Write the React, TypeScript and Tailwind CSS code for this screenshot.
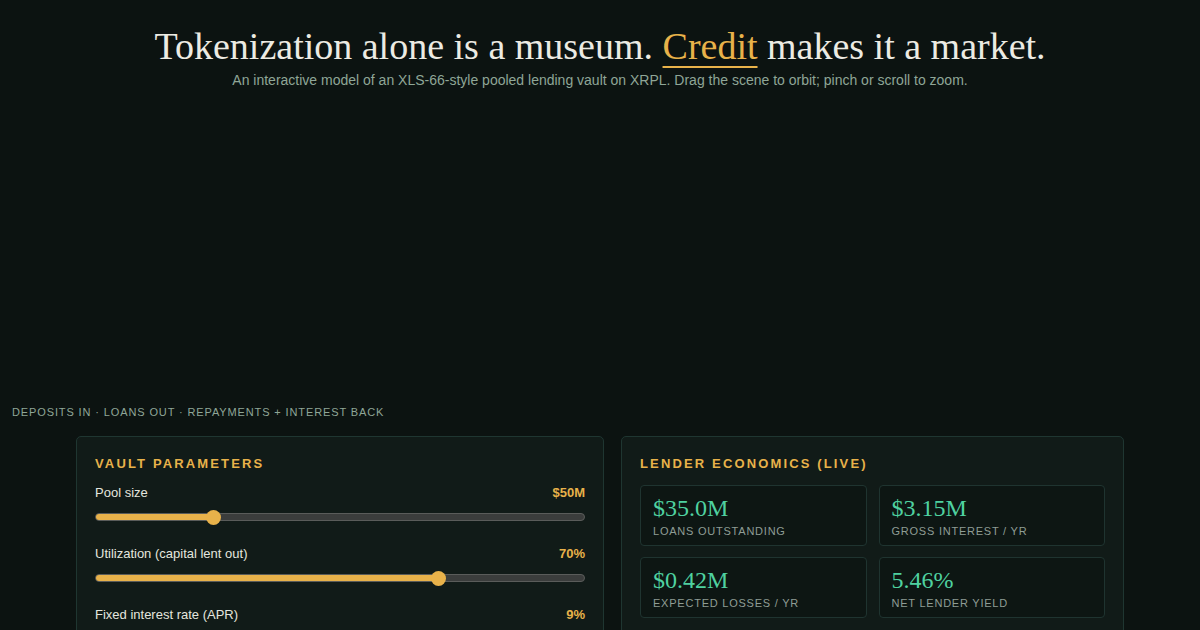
import React from "react";

const serif = { fontFamily: '"Liberation Serif", "DejaVu Serif", serif' };
const sans = { fontFamily: '"Liberation Sans", Arial, sans-serif' };

type SliderProps = { label: string; value: string; pct: number };

function Slider({ label, value, pct }: SliderProps) {
  return (
    <div className="flex flex-col">
      <div className="flex items-center justify-between h-[20px]">
        <span className="text-[13px] text-[#e4e6df]">{label}</span>
        <span className="text-[13px] font-bold text-[#e8b24a]">{value}</span>
      </div>
      <div className="relative mt-[7px] h-[14px] flex items-center">
        <div className="w-full h-[8px] rounded-full bg-[#3b3d3c] border border-[#5a5c5a] overflow-hidden">
          <div className="h-full bg-[#e8b24a]" style={{ width: `${pct}%` }} />
        </div>
        <div
          className="absolute top-0 w-[15px] h-[15px] -ml-[7px] rounded-full bg-[#e8b24a]"
          style={{ left: `${pct}%` }}
        />
      </div>
    </div>
  );
}

type StatProps = { value: string; label: string };

function Stat({ value, label }: StatProps) {
  return (
    <div className="rounded-[4px] border border-[#1f3430] bg-[#0d1613] px-[12px] pt-[9px] pb-[9px] h-[61px]">
      <div className="text-[24px] leading-[27px] text-[#4fd1a0]" style={serif}>
        {value}
      </div>
      <div className="mt-[2px] text-[11px] leading-[14px] tracking-[0.07em] uppercase text-[#8f9d95]">
        {label}
      </div>
    </div>
  );
}

export default function App() {
  return (
    <div className="w-[1200px] h-[630px] overflow-hidden bg-[#0c1311]" style={sans}>
      <header className="pt-[24px] flex flex-col items-center">
        <h1 className="text-[38px] leading-[44px] text-[#ecebe3]" style={serif}>
          Tokenization alone is a museum.{" "}
          <span className="text-[#e8b24a] underline decoration-2 underline-offset-[7px] decoration-[#e8b24a]">
            Credit
          </span>{" "}
          makes it a market.
        </h1>
        <p className="mt-[3px] text-[14px] leading-[18px] text-[#8fa697]">
          An interactive model of an XLS-66-style pooled lending vault on XRPL. Drag the scene to orbit; pinch or scroll to zoom.
        </p>
      </header>

      {/* 3D scene viewport */}
      <div className="h-[316px]" />

      <div className="px-[12px] text-[11px] leading-[14px] tracking-[0.08em] uppercase text-[#8fa697]">
        Deposits in · Loans out · Repayments + Interest back
      </div>

      <div className="mt-[17px] mx-auto w-[1048px] grid grid-cols-[528px_503px] gap-[17px]">
        <section className="rounded-[5px] border border-[#1f3631] bg-[#111b18] px-[18px] pt-[20px] pb-[20px]">
          <h2 className="text-[13px] leading-[14px] font-bold tracking-[0.165em] uppercase text-[#e8b24a]">
            Vault Parameters
          </h2>
          <div className="mt-[12px] flex flex-col gap-[20px]">
            <Slider label="Pool size" value="$50M" pct={24} />
            <Slider label="Utilization (capital lent out)" value="70%" pct={70} />
            <Slider label="Fixed interest rate (APR)" value="9%" pct={40} />
          </div>
        </section>

        <section className="rounded-[5px] border border-[#1f3631] bg-[#111b18] px-[18px] pt-[20px] pb-[20px]">
          <h2 className="text-[13px] leading-[14px] font-bold tracking-[0.165em] uppercase text-[#e8b24a]">
            Lender Economics (Live)
          </h2>
          <div className="mt-[14px] grid grid-cols-2 gap-x-[12px] gap-y-[11px]">
            <Stat value="$35.0M" label="Loans outstanding" />
            <Stat value="$3.15M" label="Gross interest / yr" />
            <Stat value="$0.42M" label="Expected losses / yr" />
            <Stat value="5.46%" label="Net lender yield" />
          </div>
        </section>
      </div>
    </div>
  );
}
